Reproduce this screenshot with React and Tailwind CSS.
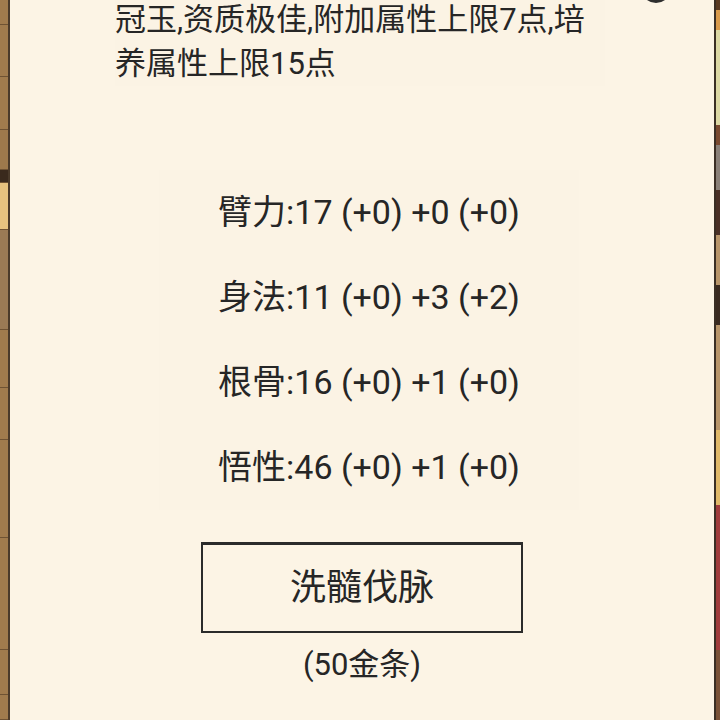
const stats = [
  { name: '臂力', text: '17 (+0) +0 (+0)' },
  { name: '身法', text: '11 (+0) +3 (+2)' },
  { name: '根骨', text: '16 (+0) +1 (+0)' },
  { name: '悟性', text: '46 (+0) +1 (+0)' },
];

// wood-plank strip on the left edge
const leftPlanks = [
  { h: 'h-[25px]', c: 'bg-[#a07b4d]' },
  { h: 'h-[52px]', c: 'bg-[#a07b4d]' },
  { h: 'h-[53px]', c: 'bg-[#a07b4d]' },
  { h: 'h-[40px]', c: 'bg-[#9d794c]' },
  { h: 'h-[13px]', c: 'bg-[#3a2a1d]' },
  { h: 'h-[47px]', c: 'bg-[#e6c27f]' },
  { h: 'h-[100px]', c: 'bg-[#9a7a55]' },
  { h: 'h-[58px]', c: 'bg-[#a07b4d]' },
  { h: 'h-[52px]', c: 'bg-[#a07b4d]' },
  { h: 'h-[98px]', c: 'bg-[#a07b4d]' },
  { h: 'h-[112px]', c: 'bg-[#a07b4d]' },
  { h: 'h-[45px]', c: 'bg-[#a07b4d]' },
  { h: 'h-[25px]', c: 'bg-[#a07b4d]' },
];

const rightStrip = [
  { h: 'h-[10px]', c: 'bg-[#5a3a22]' },
  { h: 'h-[20px]', c: 'bg-[#d99a4a]' },
  { h: 'h-[95px]', c: 'bg-[#dcd8a4]' },
  { h: 'h-[20px]', c: 'bg-[#7a4a30]' },
  { h: 'h-[45px]', c: 'bg-[#8a8078]' },
  { h: 'h-[45px]', c: 'bg-[#4a3026]' },
  { h: 'h-[50px]', c: 'bg-[#b8956a]' },
  { h: 'h-[40px]', c: 'bg-[#3a2a20]' },
  { h: 'h-[105px]', c: 'bg-[#b8956a]' },
  { h: 'h-[75px]', c: 'bg-[#e0b868]' },
  { h: 'h-[145px]', c: 'bg-[#a03c3c]' },
  { h: 'h-[70px]', c: 'bg-[#7a5238]' },
];

export default function App() {
  return (
    <div
      className="w-[720px] h-[720px] flex overflow-hidden bg-[#fbf4e5] text-[#262626]"
      style={{ fontFamily: 'Roboto, "Noto Sans CJK SC", sans-serif' }}
    >
      {/* left frame */}
      <div className="w-[8px] flex flex-col shrink-0">
        {leftPlanks.map((p, i) => (
          <div key={i} className={`${p.h} ${p.c} border-b border-[#6e5233]`} />
        ))}
      </div>
      <div className="w-[2px] bg-[#4a3a2a] shrink-0" />

      {/* panel */}
      <div className="relative flex-1 flex flex-col items-center bg-[#fcf4e5]">
        {/* close button ring peeking in from above */}
        <div className="absolute left-[631px] top-[-27px] w-[30px] h-[30px] rounded-full border-[3px] border-[#2e2e2e]" />

        <div className="self-start ml-[105px] mt-[-2px] w-[490px] text-[31px] leading-[44px] bg-[#fbf3e4]">
          <div className="whitespace-nowrap">冠玉,资质极佳,附加属性上限7点,培</div>
          <div>养属性上限15点</div>
        </div>

        <div className="mt-[84px] flex flex-col w-[420px] ml-[14px]">
          {stats.map((s) => (
            <div
              key={s.name}
              className="h-[85px] flex items-center justify-center text-[34px] bg-[#fbf3e4]"
            >
              {s.name}:{s.text}
            </div>
          ))}
        </div>

        <button className="mt-[32px] w-[322px] h-[91px] border-2 border-[#2b2b2b] border-t-[3px] flex items-center justify-center text-[36px] text-[#262626] bg-transparent">
          洗髓伐脉
        </button>
        <div className="mt-[12px] text-[31px] leading-[40px]">(50金条)</div>
      </div>

      {/* right frame */}
      <div className="w-[2px] bg-[#3a2e24] shrink-0" />
      <div className="w-[4px] flex flex-col shrink-0">
        {rightStrip.map((p, i) => (
          <div key={i} className={`${p.h} ${p.c}`} />
        ))}
      </div>
    </div>
  );
}
